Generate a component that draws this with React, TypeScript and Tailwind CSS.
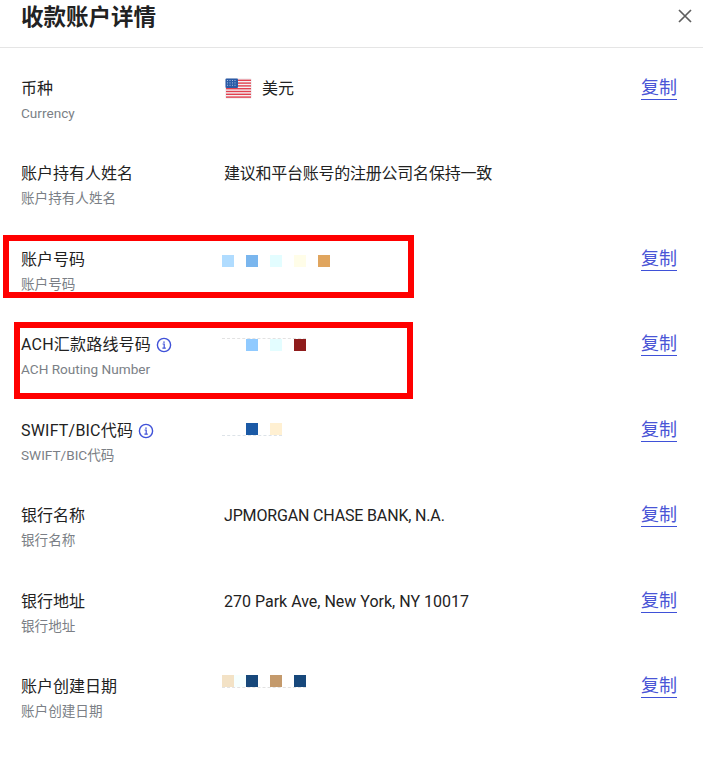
import React from "react";

const font = { fontFamily: '"Roboto","Noto Sans CJK SC",sans-serif' };

function Info() {
  return (
    <svg width="16" height="16" viewBox="0 0 16 16" fill="none" stroke="#3f51d8" className="ml-[5px] shrink-0">
      <circle cx="8" cy="8" r="6.6" strokeWidth="1.4" />
      <path d="M6.6 7h1.6v4M6.4 11.2h3.4" strokeWidth="1.2" />
      <path d="M8 4.4v1.3" strokeWidth="1.5" />
    </svg>
  );
}

function Flag() {
  const stripes = [0, 1, 2, 3, 4, 5, 6];
  return (
    <svg width="27" height="21" viewBox="0 0 27 21" className="shrink-0">
      <rect width="27" height="21" rx="2.5" fill="#f3f1f3" />
      {stripes.map((i) => (
        <rect key={i} x="1" y={1.6 + i * 2.8} width="25" height="1.4" fill="#e2404f" />
      ))}
      <rect x="0.5" y="0.5" width="12.5" height="9.5" rx="1" fill="#2a5ba6" />
      {[2, 4.4, 6.8].map((y) =>
        [2, 4.5, 7, 9.5].map((x) => <rect key={`${x}-${y}`} x={x} y={y} width="1" height="1" fill="#a9c0e4" />)
      )}
    </svg>
  );
}

function Mosaic({ colors, className }: { colors: string[]; className: string }) {
  return (
    <div className={`flex w-fit gap-3 -ml-[2px] ${className}`}>
      {colors.map((c, i) => (
        <div key={i} className="w-3 h-3" style={{ backgroundColor: c }} />
      ))}
    </div>
  );
}

function Row({
  label,
  sub,
  info,
  value,
  copy = true,
}: {
  label: string;
  sub: string;
  info?: boolean;
  value: React.ReactNode;
  copy?: boolean;
}) {
  return (
    <div className="flex h-[85.5px] pl-[21px] pr-[26px]">
      <div className="w-[203px] shrink-0">
        <div className={`flex items-center h-6 text-base leading-6 text-[#222222] ${info ? "tracking-[0.2px]" : ""}`}>
          {label}
          {info && <Info />}
        </div>
        <div className="mt-[2px] h-5 text-[13.6px] leading-5 text-[#7b7f86]">{sub}</div>
      </div>
      <div className="flex-1 text-base leading-6 text-[#222222]">{value}</div>
      {copy && (
        <div className="h-[23px] text-lg leading-[22px] text-[#4a55d6] border-b border-[#3f51d8]">复制</div>
      )}
    </div>
  );
}

export default function App() {
  return (
    <div className="relative w-[703px] h-[778px] bg-white overflow-hidden" style={font}>
      <header className="flex justify-between h-[48px] border-b border-[#e5e5e5] pl-[21px] pr-[11px]">
        <h1 className="mt-[1px] text-[22.5px] font-bold leading-8 text-[#222222]">收款账户详情</h1>
        <svg width="14" height="14" viewBox="0 0 14 14" stroke="#5f5f5f" strokeWidth="1.7" fill="none" className="mt-[9px]">
          <path d="M1 1l12 12M13 1L1 13" />
        </svg>
      </header>
      <main className="pt-[28.5px]">
        <Row
          label="币种"
          sub="Currency"
          value={
            <div className="flex items-center gap-[10px] pl-[1px]">
              <Flag />
              <span>美元</span>
            </div>
          }
        />
        <Row
          label="账户持有人姓名"
          sub="账户持有人姓名"
          value={<span className="tracking-[-0.24px]">建议和平台账号的注册公司名保持一致</span>}
          copy={false}
        />
        <Row
          label="账户号码"
          sub="账户号码"
          value={<Mosaic className="mt-[7px]" colors={["#b0dcff", "#7ab6ee", "#e3fdff", "#fffde8", "#e0a55e"]} />}
        />
        <Row
          label="ACH汇款路线号码"
          sub="ACH Routing Number"
          info
          value={
            <Mosaic
              className="mt-[5px] border-t border-dashed border-[#e2e2e2]"
              colors={["#ffffff", "#90caff", "#e3fdff", "#8f1c1c"]}
            />
          }
        />
        <Row
          label="SWIFT/BIC代码"
          sub="SWIFT/BIC代码"
          info
          value={
            <Mosaic
              className="mt-[4.5px] border-b border-dashed border-[#dde3e8]"
              colors={["#ffffff", "#1b5aa6", "#fff0d2"]}
            />
          }
        />
        <Row
          label="银行名称"
          sub="银行名称"
          value={<span className="tracking-[-0.16px]">JPMORGAN CHASE BANK, N.A.</span>}
        />
        <Row label="银行地址" sub="银行地址" value="270 Park Ave, New York, NY 10017" />
        <Row
          label="账户创建日期"
          sub="账户创建日期"
          value={
            <div className="flex w-fit -ml-[2px] border-b border-dashed border-[#e2e2e2]">
              <div className="w-3 h-3 bg-[#f3e2c6]" />
              <div className="w-3 h-3 bg-[#f6ffff]" />
              <div className="w-3 h-3 bg-[#17487b]" />
              <div className="w-3 h-3" />
              <div className="w-3 h-3 bg-[#c49a6c]" />
              <div className="w-3 h-3" />
              <div className="w-3 h-3 bg-[#17487b]" />
            </div>
          }
        />
      </main>
      <div className="absolute left-[3px] top-[235px] w-[411px] h-[63px] border-[6px] border-[#ff0000] pointer-events-none" />
      <div className="absolute left-[14px] top-[322px] w-[399px] h-[77px] border-[6px] border-[#ff0000] pointer-events-none" />
    </div>
  );
}
